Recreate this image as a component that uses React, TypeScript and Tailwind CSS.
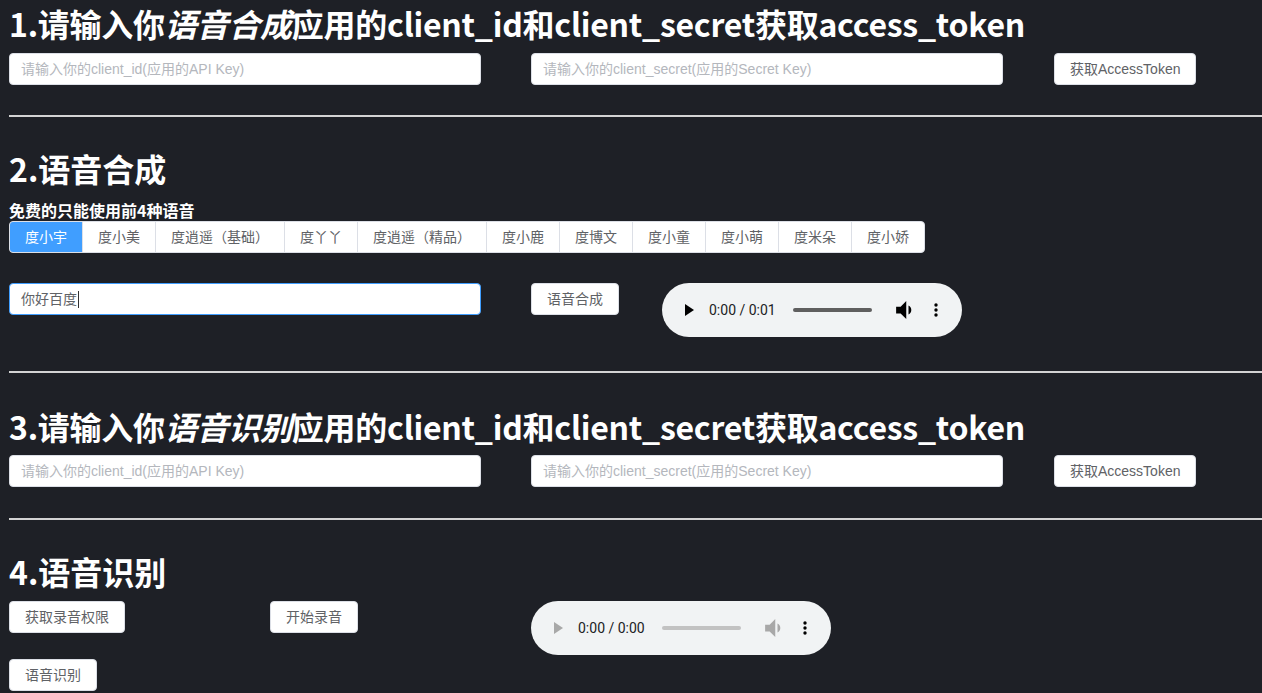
import React from "react";

const cjk = "font-['Liberation_Sans','Noto_Sans_CJK_SC',sans-serif]";
const head = "font-['Noto_Sans_CJK_SC','Noto_Sans',sans-serif]";

const Divider = () => <div className="h-[2px] bg-[#d3d3d3]" />;

const TextInput = ({ placeholder }: { placeholder: string }) => (
  <input
    readOnly
    placeholder={placeholder}
    className={`${cjk} h-8 w-[472px] rounded-[4px] border border-[#dcdfe6] bg-white pl-[11px] text-[14px] text-[#606266] outline-none placeholder:text-[#b4b7bd]`}
  />
);

const Btn = ({ children }: { children: React.ReactNode }) => (
  <button
    className={`${cjk} h-8 rounded-[4px] border border-[#dcdfe6] bg-white px-[15px] text-[14px] text-[#606266]`}
  >
    {children}
  </button>
);

const AudioBox = ({ time, disabled }: { time: string; disabled?: boolean }) => {
  const icon = disabled ? "#a8a8a8" : "#000";
  return (
    <div className="flex h-[54px] w-[300px] items-center rounded-full bg-[#f1f3f4] pl-[23px]">
      <svg width="9" height="12" viewBox="0 0 9 12">
        <polygon points="0,0 9,6 0,12" fill={icon} />
      </svg>
      <span className="ml-[15px] w-[66px] font-['Roboto',sans-serif] text-[14px] whitespace-nowrap text-[#202124]">
        {time}
      </span>
      <div
        className={`ml-[18px] h-[4px] w-[79px] rounded-full ${disabled ? "bg-[#c2c2c2]" : "bg-[#5f5f5f]"}`}
      />
      <svg className="ml-[24px]" width="16" height="18" viewBox="3 4 14 16">
        <path
          d="M3 9v6h4l5 5V4L7 9H3zm13.5 3c0-1.77-1.02-3.29-2.5-4.03v8.05c1.48-.73 2.5-2.25 2.5-4.02z"
          fill={icon}
        />
      </svg>
      <svg className="ml-[22px]" width="4" height="14" viewBox="0 0 4 14">
        <circle cx="2" cy="2" r="1.7" fill="#000" />
        <circle cx="2" cy="7" r="1.7" fill="#000" />
        <circle cx="2" cy="12" r="1.7" fill="#000" />
      </svg>
    </div>
  );
};

const voices = [
  "度小宇",
  "度小美",
  "度逍遥（基础）",
  "度丫丫",
  "度逍遥（精品）",
  "度小鹿",
  "度博文",
  "度小童",
  "度小萌",
  "度米朵",
  "度小娇",
];

const TokenRow = () => (
  <div className="flex items-center">
    <TextInput placeholder="请输入你的client_id(应用的API Key)" />
    <div className="ml-[50px]">
      <TextInput placeholder="请输入你的client_secret(应用的Secret Key)" />
    </div>
    <div className="ml-[51px]">
      <Btn>获取AccessToken</Btn>
    </div>
  </div>
);

export default function App() {
  return (
    <div className="min-h-[693px] w-full overflow-hidden bg-[#1e2026] pl-[9px]">
      {/* 1 */}
      <h1 className={`${head} pt-[3px] text-[32px] leading-[40px] font-bold tracking-[-0.25px] whitespace-nowrap text-white`}>
        1.请输入你<em>语音合成</em>应用的client_id和client_secret获取access_token
      </h1>
      <div className="mt-[10px]">
        <TokenRow />
      </div>
      <div className="mt-[30px]">
        <Divider />
      </div>

      {/* 2 */}
      <h1 className={`${head} mt-[31px] text-[32px] leading-[40px] font-bold text-white`}>2.语音合成</h1>
      <p className={`${head} mt-[13px] text-[16px] leading-[18px] font-bold text-white`}>免费的只能使用前4种语音</p>
      <div className={`${cjk} mt-[2px] flex w-fit overflow-hidden rounded-[4px] border border-[#dcdfe6] bg-white`}>
        {voices.map((v, i) => (
          <div
            key={v}
            className={`h-[30px] px-[15px] text-[14px] leading-[30px] whitespace-nowrap ${
              i === 0 ? "bg-[#409eff] text-white" : "border-l border-[#dcdfe6] text-[#606266]"
            }`}
          >
            {v}
          </div>
        ))}
      </div>

      <div className="mt-[30px] flex items-start">
        <div
          className={`${cjk} flex h-8 w-[472px] items-center rounded-[4px] border border-[#409eff] bg-white pl-[11px] text-[14px] text-[#606266]`}
        >
          你好百度
          <span className="ml-px h-[17px] w-px bg-[#303133]" />
        </div>
        <div className="ml-[50px]">
          <Btn>语音合成</Btn>
        </div>
        <div className="ml-[43px]">
          <AudioBox time="0:00 / 0:01" />
        </div>
      </div>
      <div className="mt-[34px]">
        <Divider />
      </div>

      {/* 3 */}
      <h1 className={`${head} mt-[33px] text-[32px] leading-[40px] font-bold tracking-[-0.25px] whitespace-nowrap text-white`}>
        3.请输入你<em>语音识别</em>应用的client_id和client_secret获取access_token
      </h1>
      <div className="mt-[9px]">
        <TokenRow />
      </div>
      <div className="mt-[31px]">
        <Divider />
      </div>

      {/* 4 */}
      <h1 className={`${head} mt-[31px] text-[32px] leading-[40px] font-bold text-white`}>4.语音识别</h1>
      <div className="mt-[10px] flex items-start">
        <Btn>获取录音权限</Btn>
        <div className="ml-[145px]">
          <Btn>开始录音</Btn>
        </div>
        <div className="ml-[173px]">
          <AudioBox time="0:00 / 0:00" disabled />
        </div>
      </div>
      <div className="mt-[4px]">
        <Btn>语音识别</Btn>
      </div>
    </div>
  );
}
